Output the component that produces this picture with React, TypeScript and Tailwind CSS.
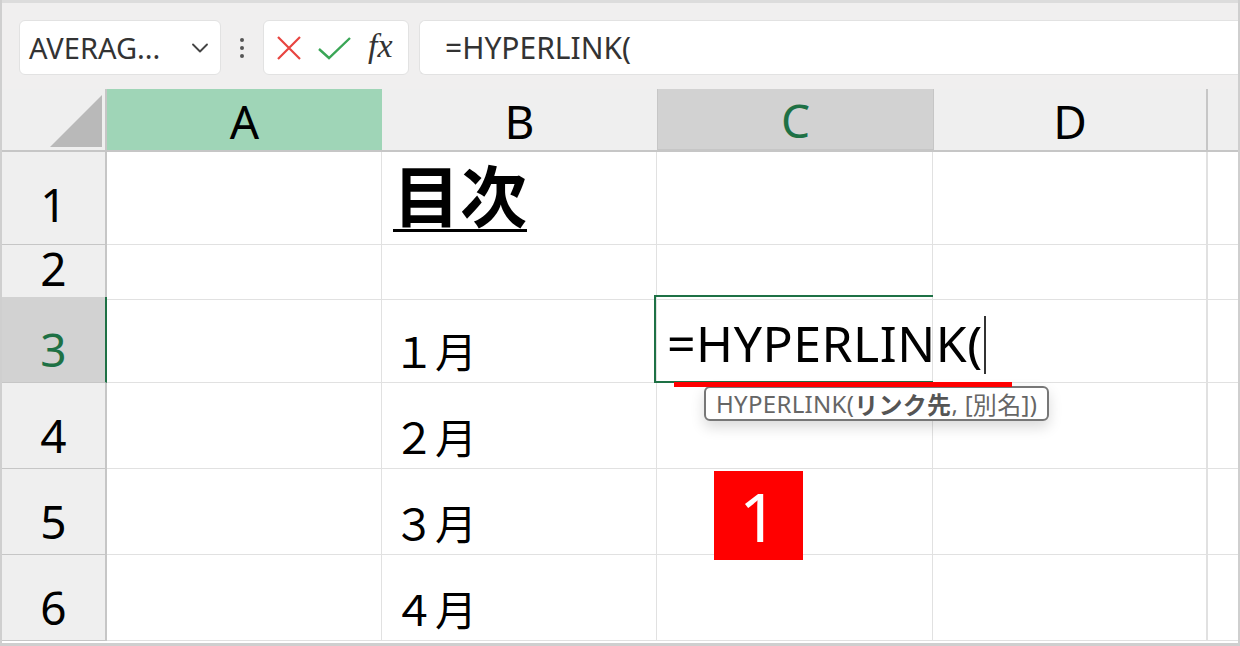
import { ChevronDown } from 'lucide-react'

const latin = "font-['Noto_Sans','Noto_Sans_CJK_JP',sans-serif]"
const jp = "font-['Noto_Sans_CJK_JP',sans-serif]"
const cols = 'grid grid-cols-[105px_275px_275px_276px_275px_1fr]'

const rows = [
  { n: '1', h: 'h-[93px]', pb: 'pb-[17px]', b: '目次' },
  { n: '2', h: 'h-[52px]', pb: 'pb-[8px]', b: '' },
  { n: '3', h: 'h-[86px]', pb: 'pb-[10px]', b: '１月' },
  { n: '4', h: 'h-[86px]', pb: 'pb-[10px]', b: '２月' },
  { n: '5', h: 'h-[86px]', pb: 'pb-[10px]', b: '３月' },
  { n: '6', h: 'h-[86px]', pb: 'pb-[10px]', b: '４月' },
]

function Toolbar() {
  return (
    <div className="h-[89px] bg-[#f0efef] border-t-[3px] border-[#dcdcdc] flex items-start pt-[17px] pl-[17px]">
      <div className="w-[202px] h-[55px] bg-white rounded-md border border-[#e2e2e2] flex items-center justify-between pl-[9px] pr-[6px]">
        <span className={`${latin} text-[29px] text-[#333]`}>AVERAG...</span>
        <ChevronDown className="w-7 h-7 text-[#444]" strokeWidth={1.6} />
      </div>
      <div className="w-[42px] h-[55px] flex flex-col items-center justify-center gap-[4px]">
        <span className="w-[4px] h-[4px] rounded-full bg-[#555]" />
        <span className="w-[4px] h-[4px] rounded-full bg-[#555]" />
        <span className="w-[4px] h-[4px] rounded-full bg-[#555]" />
      </div>
      <div className="w-[146px] h-[55px] bg-white rounded-md border border-[#e2e2e2] flex items-center pl-[12px] gap-[16px]">
        <svg width="26" height="26" viewBox="0 0 26 26">
          <path d="M2 2 L24 24 M24 2 L2 24" stroke="#e8443f" strokeWidth="2.2" fill="none" />
        </svg>
        <svg width="34" height="26" viewBox="0 0 34 26">
          <path d="M1 14 L11 23 L32 3" stroke="#3aa656" strokeWidth="2.4" fill="none" />
        </svg>
        <span className="font-['Liberation_Serif',serif] italic text-[34px] text-[#333] leading-none -mt-[4px]">fx</span>
      </div>
      <div className="flex-1 ml-[10px] h-[55px] bg-white rounded-l-md border border-[#e2e2e2] border-r-0 flex items-center pl-[25px]">
        <span className={`${latin} text-[30px] text-[#333]`}>=HYPERLINK(</span>
      </div>
    </div>
  )
}

function Header() {
  const head = `flex items-center justify-center ${latin} text-[46px] leading-none pt-[2px] border-b-2 border-b-[#c6c6c6]`
  return (
    <div className={`${cols} grid-rows-[63px] h-[63px] bg-[#efefef] overflow-hidden`}>
      <div className="border-r-2 border-[#c6c6c6] border-b-2 relative">
        <svg className="absolute left-[48px] top-[6px]" width="52" height="52" viewBox="0 0 52 52">
          <polygon points="0,52 52,0 52,52" fill="#b9b9b9" />
        </svg>
      </div>
      <div className={`${head} bg-[#9fd5b7] text-black`}>A</div>
      <div className={`${head} text-black`}>B</div>
      <div className={`${head} bg-[#d2d2d2] border-l border-l-[#c6c6c6] border-b-[3px] border-b-[#1e7145] text-[#1e7145]`}>C</div>
      <div className={`${head} border-l border-l-[#c6c6c6] border-r-2 border-r-[#c6c6c6] text-black`}>D</div>
      <div className="border-b-2 border-b-[#c6c6c6]" />
    </div>
  )
}

function Sheet() {
  return (
    <div>
      {rows.map((r) => {
        const active = r.n === '3'
        return (
          <div key={r.n} className={`${cols} ${r.h}`}>
            <div
              className={`${active ? 'bg-[#d2d2d2] text-[#1e7145] border-r-2 border-r-[#1e7145]' : 'bg-[#efefef] text-black border-r-2 border-r-[#c6c6c6]'} border-b border-[#c6c6c6] flex items-end justify-center ${r.pb} ${latin} text-[46px] leading-none`}
            >
              {r.n}
            </div>
            <div className="border-r border-b border-[#e1e1e1]" />
            <div className="border-r border-b border-[#e1e1e1] flex items-end pl-[11px] pb-[8px]">
              {r.n === '1' ? (
                <span className={`${jp} font-bold text-[67px] leading-none underline underline-offset-[7px] decoration-[3px] pb-[10px]`}>{r.b}</span>
              ) : (
                <span className={`${jp} text-[42px] leading-none text-black pb-[3px]`}>{r.b}</span>
              )}
            </div>
            <div className="border-r border-b border-[#e1e1e1] relative">
              {active && (
                <>
                  <div className="absolute -left-[3px] -top-[2px] w-[279px] h-[88px] border-2 border-[#1e7145] border-r-0" />
                  <span className={`absolute left-[10px] bottom-[8px] ${latin} text-[50px] tracking-[0.5px] leading-none whitespace-nowrap text-black z-10`}>
                    =HYPERLINK(
                    <span className="inline-block w-[2px] h-[58px] bg-[#333] align-[-12px] ml-[1px]" />
                  </span>
                  <div className="absolute left-[17px] top-[85px] w-[338px] h-[5px] bg-[#ff0000] z-20" />
                  <div className="absolute left-[47px] top-[89px] h-[35px] px-[10px] bg-white border-2 border-[#777] rounded-[6px] shadow-[0_6px_14px_rgba(0,0,0,0.15)] flex items-center whitespace-nowrap z-10 tracking-[0.3px]">
                    <span className={`${latin} text-[24px] text-[#666]`}>HYPERLINK(</span>
                    <span className={`${jp} text-[24px] font-bold text-[#555]`}>リンク先</span>
                    <span className={`${latin} text-[24px] text-[#666]`}>,&nbsp;[</span>
                    <span className={`${jp} text-[24px] text-[#666]`}>別名</span>
                    <span className={`${latin} text-[24px] text-[#666]`}>])</span>
                  </div>
                </>
              )}
              {r.n === '5' && (
                <div className={`absolute left-[57px] top-[2px] w-[89px] h-[89px] bg-[#ff0000] flex items-center justify-center ${latin} text-[68px] leading-none text-white z-10`}>
                  1
                </div>
              )}
            </div>
            <div className="border-r-2 border-r-[#e1e1e1] border-b border-[#e1e1e1]" />
            <div className="border-b border-[#e1e1e1]" />
          </div>
        )
      })}
    </div>
  )
}

export default function App() {
  return (
    <div className="w-[1240px] h-[646px] overflow-hidden bg-white border-x-2 border-b-[3px] border-[#cfcfcf] box-border">
      <Toolbar />
      <Header />
      <Sheet />
    </div>
  )
}
